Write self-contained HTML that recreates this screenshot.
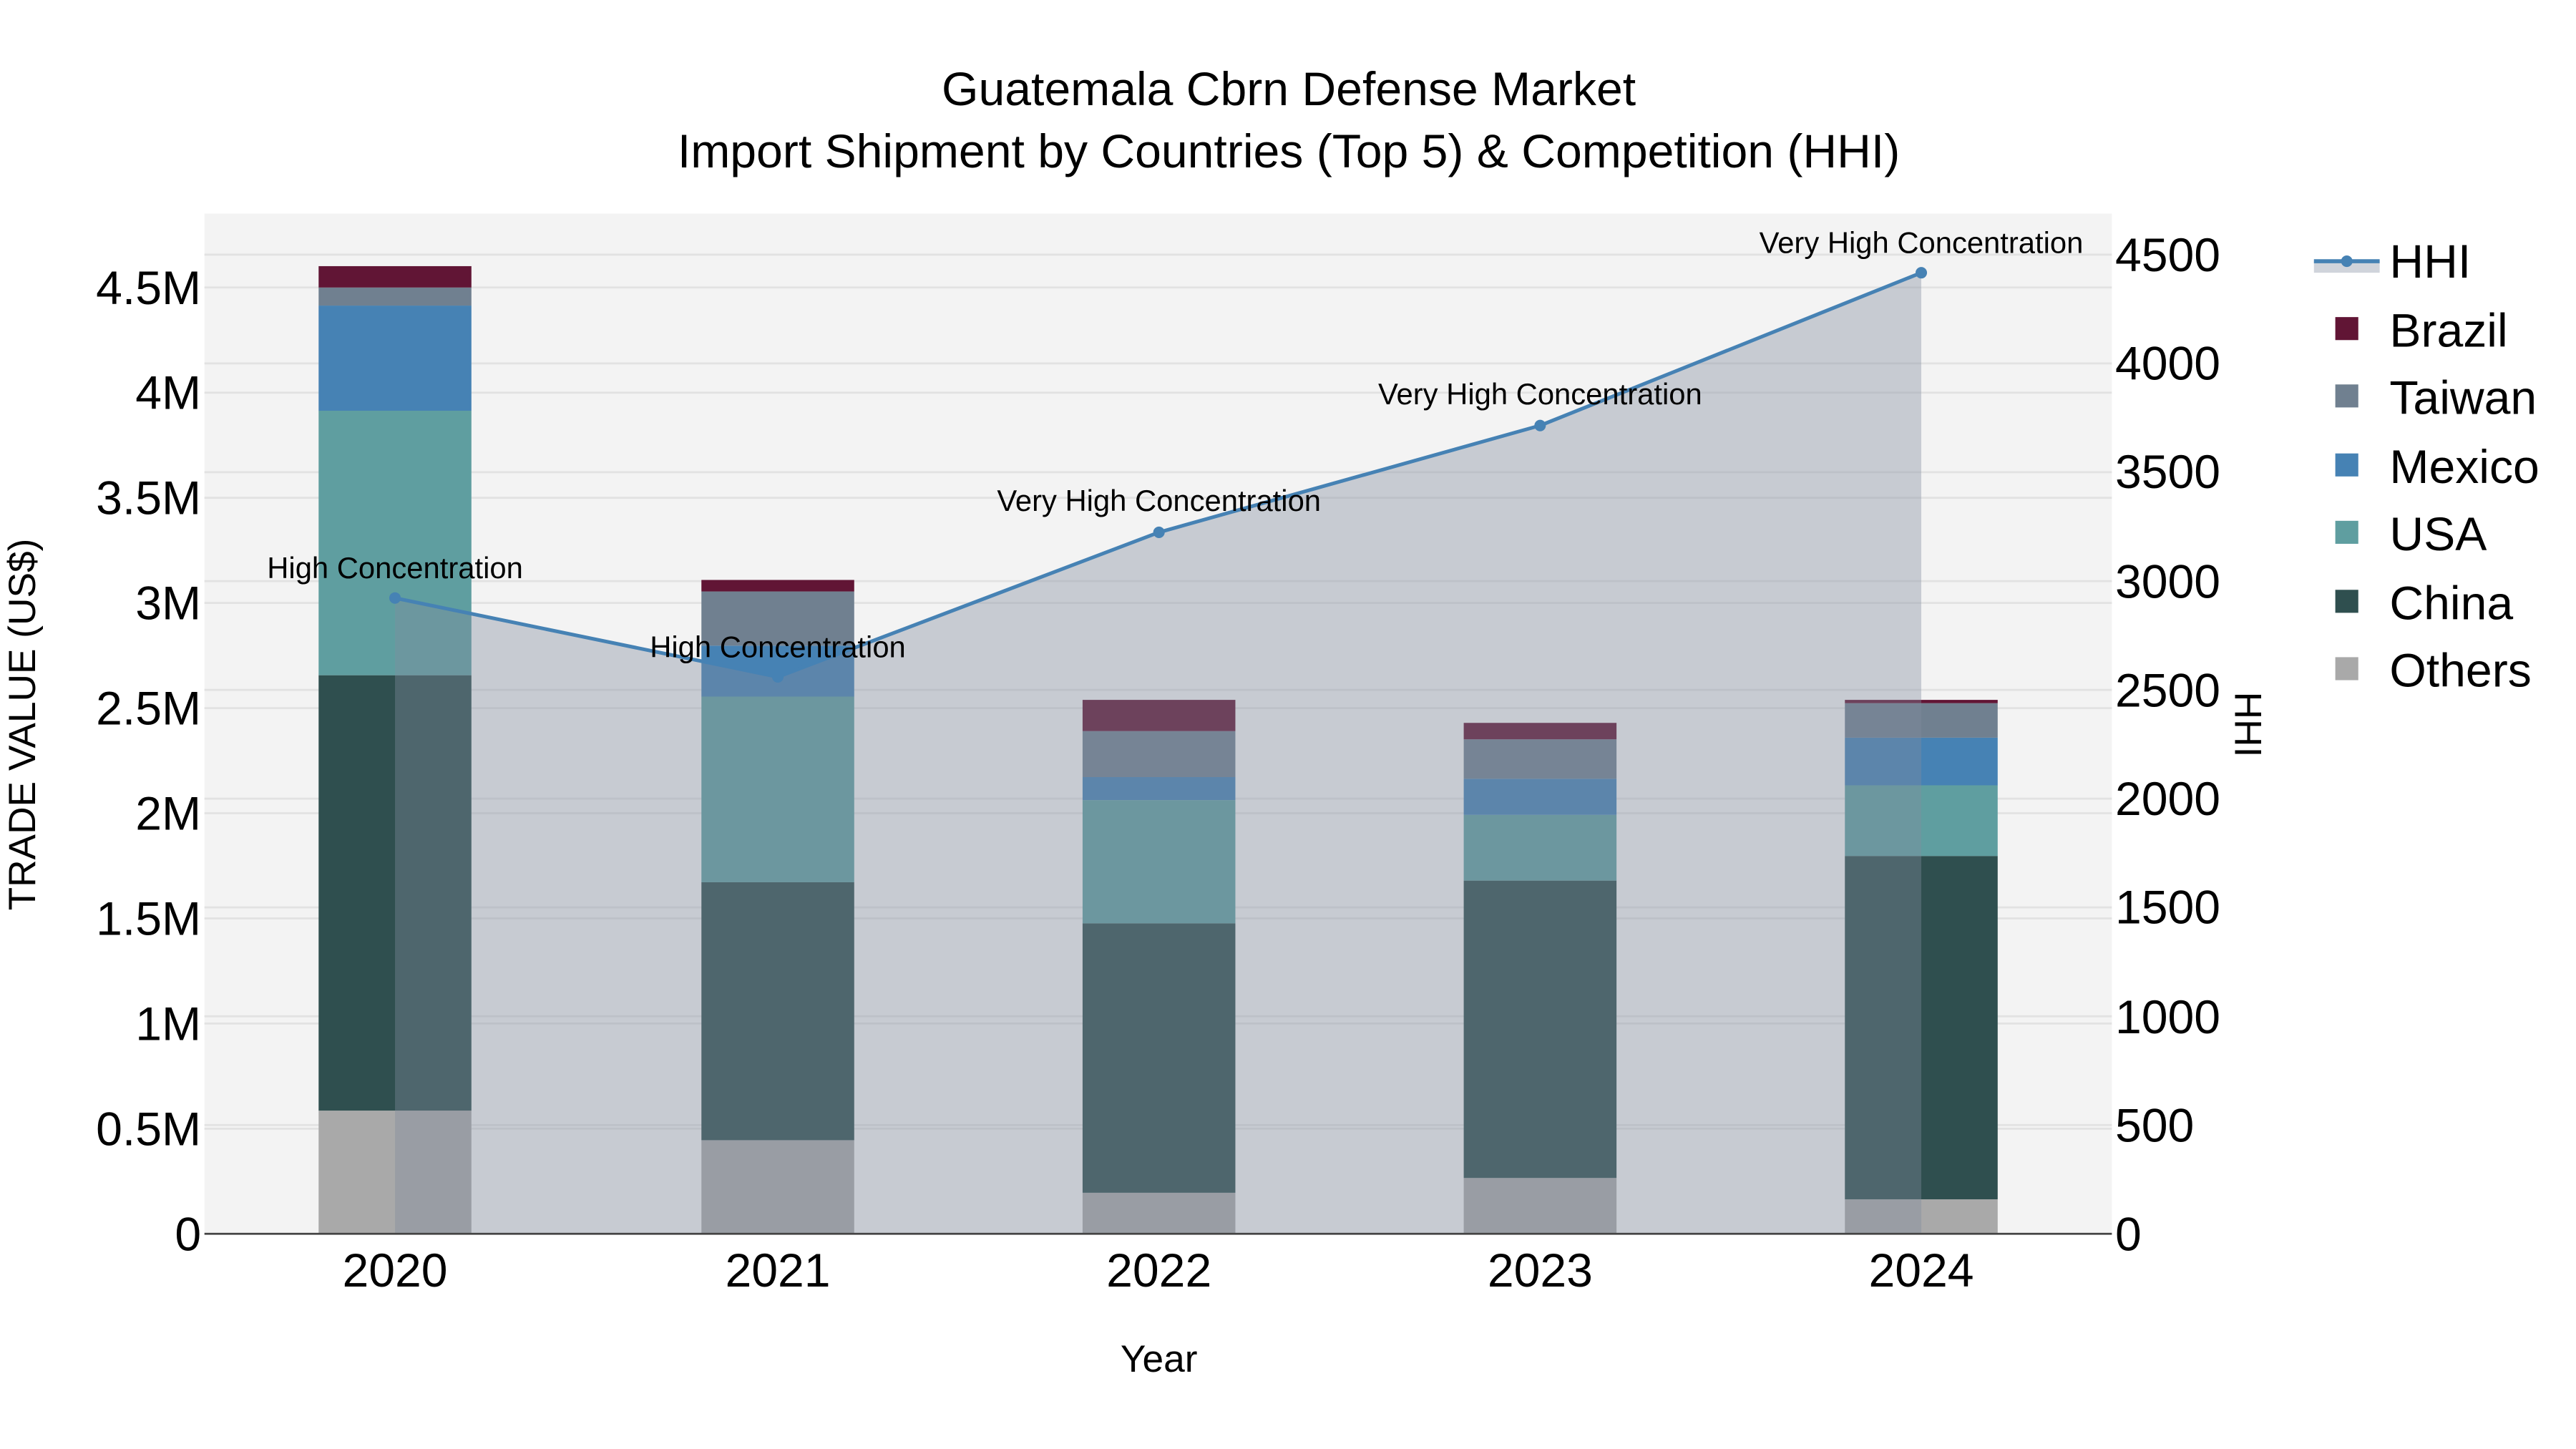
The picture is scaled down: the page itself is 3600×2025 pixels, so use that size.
<!DOCTYPE html>
<html><head><meta charset="utf-8"><style>html,body{margin:0;padding:0;background:#fff}svg{display:block}text{font-family:"Liberation Sans",sans-serif;fill:#000}</style></head>
<body>
<svg width="3600" height="2025" viewBox="0 0 3600 2025" xmlns="http://www.w3.org/2000/svg">
<rect x="0" y="0" width="3600" height="2025" fill="#fff"/>
<g transform="matrix(2.296 0 0 2.296 1 0)">
<rect x="124" y="130" width="1161" height="621" fill="#f3f3f3"/>
<g stroke="#e2e2e2" stroke-width="1.2">
<line x1="124" x2="1285" y1="687" y2="687"/><line x1="124" x2="1285" y1="623" y2="623"/><line x1="124" x2="1285" y1="559" y2="559"/><line x1="124" x2="1285" y1="495" y2="495"/><line x1="124" x2="1285" y1="431" y2="431"/><line x1="124" x2="1285" y1="367" y2="367"/><line x1="124" x2="1285" y1="303" y2="303"/><line x1="124" x2="1285" y1="239" y2="239"/><line x1="124" x2="1285" y1="175" y2="175"/>
<line x1="124" x2="1285" y1="684.8" y2="684.8"/><line x1="124" x2="1285" y1="618.6" y2="618.6"/><line x1="124" x2="1285" y1="552.3" y2="552.3"/><line x1="124" x2="1285" y1="486.1" y2="486.1"/><line x1="124" x2="1285" y1="419.9" y2="419.9"/><line x1="124" x2="1285" y1="353.7" y2="353.7"/><line x1="124" x2="1285" y1="287.4" y2="287.4"/><line x1="124" x2="1285" y1="221.2" y2="221.2"/><line x1="124" x2="1285" y1="155" y2="155"/>
</g>
<g>
<rect x="193.5" y="676" width="93" height="75" fill="#a9a9a9"/><rect x="193.5" y="411" width="93" height="265" fill="#2f4f4f"/><rect x="193.5" y="250" width="93" height="161" fill="#5f9ea0"/><rect x="193.5" y="186" width="93" height="64" fill="#4682b4"/><rect x="193.5" y="175" width="93" height="11" fill="#708090"/><rect x="193.5" y="162" width="93" height="13" fill="#611535"/>
<rect x="426.5" y="694" width="93" height="57" fill="#a9a9a9"/><rect x="426.5" y="537" width="93" height="157" fill="#2f4f4f"/><rect x="426.5" y="424" width="93" height="113" fill="#5f9ea0"/><rect x="426.5" y="393" width="93" height="31" fill="#4682b4"/><rect x="426.5" y="360" width="93" height="33" fill="#708090"/><rect x="426.5" y="353" width="93" height="7" fill="#611535"/>
<rect x="658.5" y="726" width="93" height="25" fill="#a9a9a9"/><rect x="658.5" y="562" width="93" height="164" fill="#2f4f4f"/><rect x="658.5" y="487" width="93" height="75" fill="#5f9ea0"/><rect x="658.5" y="473" width="93" height="14" fill="#4682b4"/><rect x="658.5" y="445" width="93" height="28" fill="#708090"/><rect x="658.5" y="426" width="93" height="19" fill="#611535"/>
<rect x="890.5" y="717" width="93" height="34" fill="#a9a9a9"/><rect x="890.5" y="536" width="93" height="181" fill="#2f4f4f"/><rect x="890.5" y="496" width="93" height="40" fill="#5f9ea0"/><rect x="890.5" y="474" width="93" height="22" fill="#4682b4"/><rect x="890.5" y="450" width="93" height="24" fill="#708090"/><rect x="890.5" y="440" width="93" height="10" fill="#611535"/>
<rect x="1122.5" y="730" width="93" height="21" fill="#a9a9a9"/><rect x="1122.5" y="521" width="93" height="209" fill="#2f4f4f"/><rect x="1122.5" y="478" width="93" height="43" fill="#5f9ea0"/><rect x="1122.5" y="449" width="93" height="29" fill="#4682b4"/><rect x="1122.5" y="428" width="93" height="21" fill="#708090"/><rect x="1122.5" y="426" width="93" height="2" fill="#611535"/>
</g>
<polygon points="240,751 240,364 473,412 705,324 937,259 1169,166 1169,751" fill="rgb(129,140,158)" fill-opacity="0.38"/>
<line x1="124" x2="1285" y1="751" y2="751" stroke="#444" stroke-width="1.2"/>
<polyline points="240,364 473,412 705,324 937,259 1169,166" fill="none" stroke="#4682b4" stroke-width="2.2"/>
<g fill="#4682b4"><circle cx="240" cy="364" r="3.5"/><circle cx="473" cy="412" r="3.5"/><circle cx="705" cy="324" r="3.5"/><circle cx="937" cy="259" r="3.5"/><circle cx="1169" cy="166" r="3.5"/></g>
<g font-size="18.2" text-anchor="middle">
<text x="240" y="352">High Concentration</text><text x="473" y="400">High Concentration</text><text x="705" y="311">Very High Concentration</text><text x="937" y="246">Very High Concentration</text><text x="1169" y="154">Very High Concentration</text>
</g>
<g font-size="28.8" text-anchor="middle">
<text x="784" y="64">Guatemala Cbrn Defense Market</text>
<text x="784" y="102">Import Shipment by Countries (Top 5) &amp; Competition (HHI)</text>
</g>
<g font-size="28.8" text-anchor="end">
<text x="122" y="761">0</text><text x="122" y="697">0.5M</text><text x="122" y="633">1M</text><text x="122" y="569">1.5M</text><text x="122" y="505">2M</text><text x="122" y="441">2.5M</text><text x="122" y="377">3M</text><text x="122" y="313">3.5M</text><text x="122" y="249">4M</text><text x="122" y="185">4.5M</text>
</g>
<g font-size="28.8" text-anchor="start">
<text x="1287" y="761">0</text><text x="1287" y="695">500</text><text x="1287" y="629">1000</text><text x="1287" y="562">1500</text><text x="1287" y="496">2000</text><text x="1287" y="430">2500</text><text x="1287" y="364">3000</text><text x="1287" y="297">3500</text><text x="1287" y="231">4000</text><text x="1287" y="165">4500</text>
</g>
<g font-size="28.8" text-anchor="middle">
<text x="240" y="783">2020</text><text x="473" y="783">2021</text><text x="705" y="783">2022</text><text x="937" y="783">2023</text><text x="1169" y="783">2024</text>
</g>
<text x="705" y="835" font-size="23.2" text-anchor="middle">Year</text>
<text transform="translate(21,441) rotate(-90)" font-size="23.2" text-anchor="middle">TRADE VALUE (US$)</text>
<text transform="translate(1360,441) rotate(90)" font-size="23.2" text-anchor="middle">HHI</text>
<rect x="1408" y="159" width="40" height="7" fill="#d0d4db"/>
<line x1="1408" x2="1448" y1="159" y2="159" stroke="#4682b4" stroke-width="2.5"/>
<circle cx="1428" cy="159" r="3.5" fill="#4682b4"/>
<g font-size="28.8">
<text x="1454" y="169">HHI</text><text x="1454" y="211">Brazil</text><text x="1454" y="252">Taiwan</text><text x="1454" y="294">Mexico</text><text x="1454" y="335">USA</text><text x="1454" y="377">China</text><text x="1454" y="418">Others</text>
</g>
<rect x="1421" y="193" width="14" height="14" fill="#611535"/>
<rect x="1421" y="234" width="14" height="14" fill="#708090"/>
<rect x="1421" y="276" width="14" height="14" fill="#4682b4"/>
<rect x="1421" y="317" width="14" height="14" fill="#5f9ea0"/>
<rect x="1421" y="359" width="14" height="14" fill="#2f4f4f"/>
<rect x="1421" y="400" width="14" height="14" fill="#a9a9a9"/>
</g>
</svg>
</body></html>
